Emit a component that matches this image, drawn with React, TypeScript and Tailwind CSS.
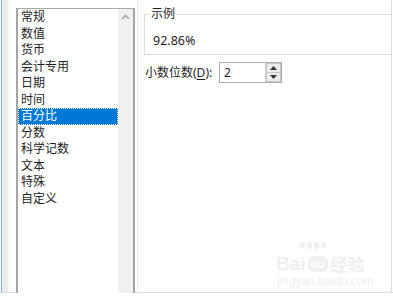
import React from "react";

const items = ["常规", "数值", "货币", "会计专用", "日期", "时间", "百分比", "分数", "科学记数", "文本", "特殊", "自定义"];

export default function App() {
  return (
    <div
      className="relative w-[393px] h-[299px] bg-white overflow-hidden text-[12px] text-[#1e1e1e]"
      style={{ fontFamily: '"Noto Sans", "Noto Sans CJK SC", sans-serif' }}
    >
      <div className="flex h-[293px] border-b border-[#dcdcdc]">
        {/* left strip */}
        <div className="flex h-full">
          <div className="w-[1px] bg-white" />
          <div className="w-[1px] bg-[#7fb2dd]" />
          <div className="w-[6px] bg-[#ececec]" />
          <div className="w-[2px] bg-[#fbfbf4]" />
          <div className="w-[6px] bg-white" />
        </div>
        {/* listbox */}
        <div className="mt-[8px] w-[119px] h-[285px] flex border-t border-[#a9a9a9] border-l-2 border-l-[#a6a6a6] border-r-2 border-r-[#a6a6a6] bg-white">
          <div className="flex-1 flex flex-col">
            {items.map((it) => (
              <div
                key={it}
                className={
                  "h-[16.5px] leading-[16.5px] pl-[3px] " +
                  (it === "百分比"
                    ? "bg-[#0078d7] text-white outline outline-1 outline-dotted outline-[#f0f0f0] -outline-offset-1"
                    : "")
                }
              >
                {it}
              </div>
            ))}
          </div>
          <div className="w-[15px] h-full bg-[#f0f0f0] flex justify-center pt-[5px]">
            <svg width="9" height="6" viewBox="0 0 9 6">
              <path d="M1 5 L4.5 1.5 L8 5" stroke="#a8a8a8" strokeWidth="1.6" fill="none" />
            </svg>
          </div>
        </div>
        {/* gap */}
        <div className="w-[9px] flex h-full">
          <div className="w-[2px]" />
          <div className="w-[1px] bg-[#ececec]" />
        </div>
        {/* right panel */}
        <div className="flex-1 flex flex-col border-r border-[#dcdcdc]">
          <div className="relative mt-[14px] h-[41px] border-t border-l border-b border-[#dcdcdc]">
            <div className="absolute left-[5px] top-[-9px] bg-white px-[1px] leading-[16px]">示例</div>
            <div className="pl-[8px] pt-[18px] leading-[16px] text-[12.5px]">92.86%</div>
          </div>
          <div className="flex items-center mt-[7px] h-[21px]">
            <div className="pl-[1px] w-[75px] leading-[16px]">
              小数位数(<span className="underline underline-offset-2">D</span>):
            </div>
            <div className="w-[63px] h-[21px] border border-[#adadad] flex">
              <div className="flex-1 pl-[4px] leading-[19px]">2</div>
              <div className="w-[16px] flex flex-col border-l border-[#d0d0d0]">
                <div className="flex-1 bg-[#ececec] border border-[#c8c8c8] flex items-center justify-center">
                  <svg width="7" height="4" viewBox="0 0 7 4">
                    <path d="M0 4 L3.5 0 L7 4 Z" fill="#333" />
                  </svg>
                </div>
                <div className="flex-1 bg-[#ececec] border border-t-0 border-[#c8c8c8] flex items-center justify-center">
                  <svg width="7" height="4" viewBox="0 0 7 4">
                    <path d="M0 0 L3.5 4 L7 0 Z" fill="#333" />
                  </svg>
                </div>
              </div>
            </div>
          </div>
        </div>
        <div className="w-[1px]" />
      </div>
      {/* faint watermark */}
      <div className="absolute left-[276px] top-[244px] w-[92px] h-[46px] pointer-events-none select-none">
        <div className="absolute left-[24px] top-[-2px] flex gap-[2px]">
          <span className="w-[5px] h-[6px] rounded-full bg-[#efefef]" />
          <span className="w-[5px] h-[7px] rounded-full bg-[#efefef]" />
          <span className="w-[5px] h-[7px] rounded-full bg-[#efefef]" />
          <span className="w-[5px] h-[6px] rounded-full bg-[#efefef]" />
        </div>
        <div className="absolute left-[0px] top-[10px] flex items-center text-[19px] leading-[20px] text-[#efefef] font-bold" style={{ fontFamily: '"Liberation Sans", sans-serif' }}>
          <span>Bai</span>
          <span className="ml-[2px] w-[20px] h-[16px] rounded-[6px] bg-[#efefef] text-white text-[11px] leading-[16px] text-center">du</span>
          <span className="ml-[3px] text-[17px]" style={{ fontFamily: '"Noto Sans CJK SC", sans-serif' }}>经验</span>
        </div>
        <div className="absolute left-[1px] top-[31px] text-[12px] leading-[13px] text-[#efefef]" style={{ fontFamily: '"Liberation Sans", sans-serif' }}>
          jingyan.baidu.com
        </div>
      </div>
    </div>
  );
}
